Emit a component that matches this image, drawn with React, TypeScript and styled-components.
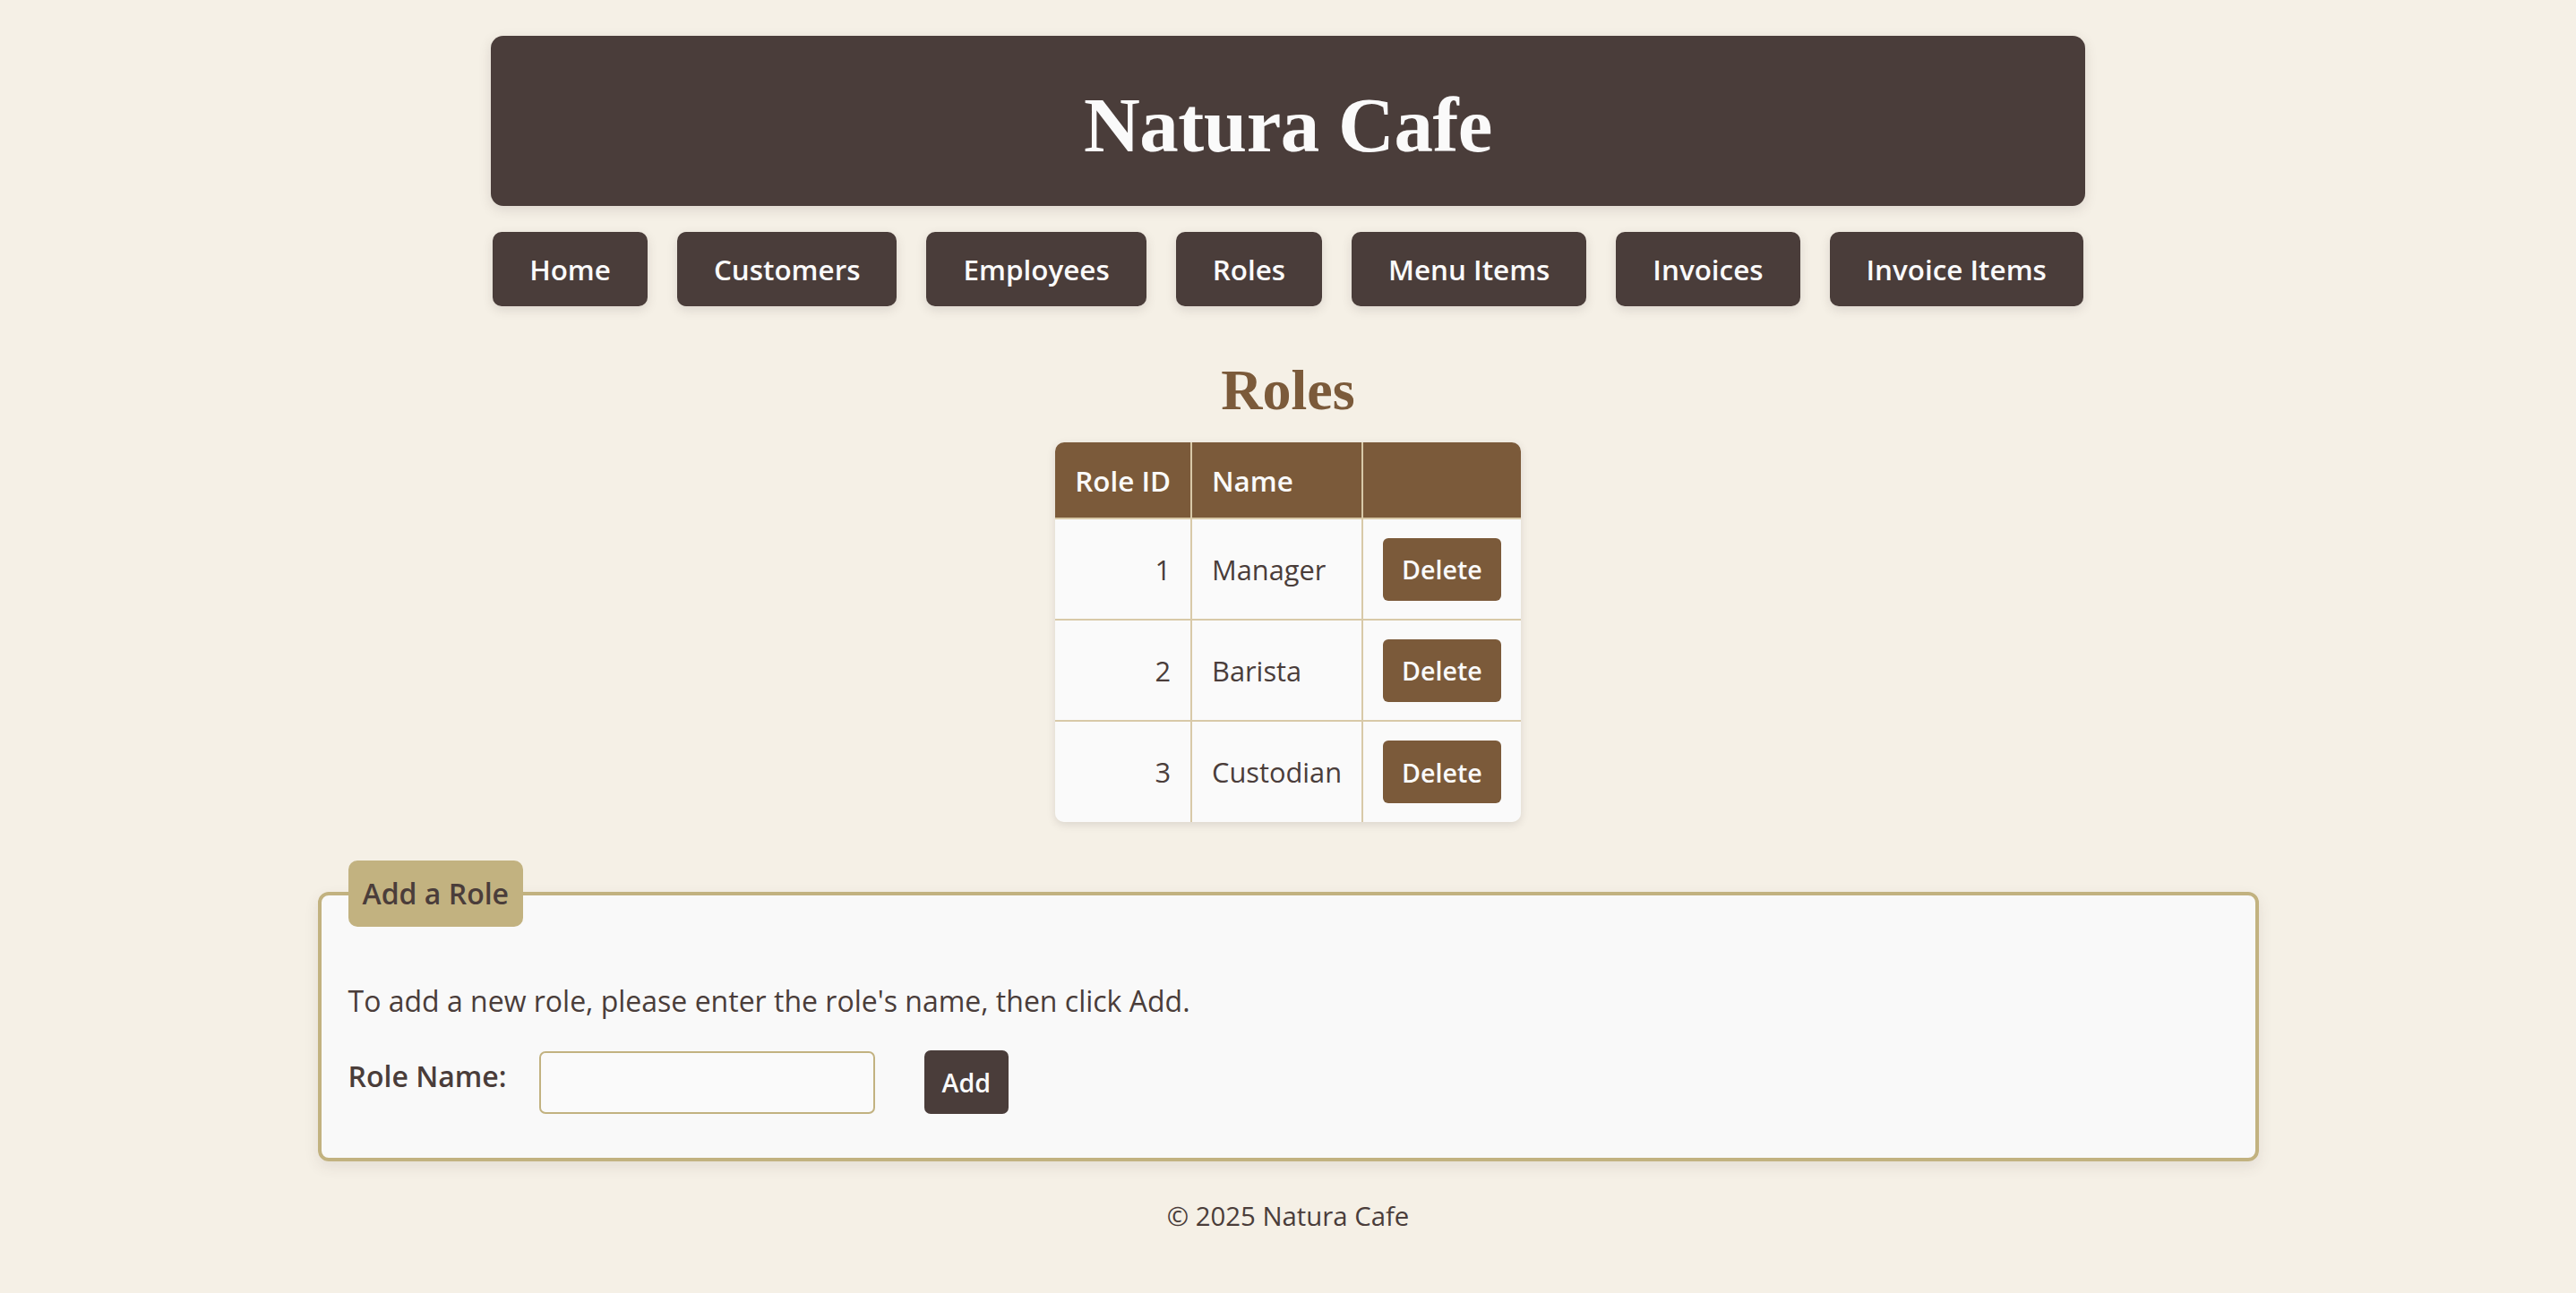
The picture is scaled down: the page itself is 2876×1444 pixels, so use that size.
import React from "react";
import styled, { createGlobalStyle } from "styled-components";

const GlobalStyle = createGlobalStyle`
  html, body {
    margin: 0;
    padding: 0;
    background: #f5f0e6;
  }
  body {
    font-family: "Open Sans", "Noto Sans", sans-serif;
    font-size: 29.34px;
    color: #4a3d3a;
  }
  * { box-sizing: border-box; }
`;

const Page = styled.div`
  display: flex;
  flex-direction: column;
  align-items: center;
  padding-top: 40px;
  padding-bottom: 40px;
`;

const Header = styled.header`
  width: 1780px;
  background: #4a3d3a;
  border-radius: 14px;
  box-shadow: 0 4px 14px rgba(74, 61, 58, 0.15);
  padding: 56px 0 47px;
  display: flex;
  justify-content: center;
`;

const Title = styled.h1`
  margin: 0;
  font-family: "Liberation Serif", "Times New Roman", serif;
  font-weight: 700;
  font-size: 87px;
  line-height: 1;
  letter-spacing: -0.5px;
  color: #fafafa;
`;

const Nav = styled.nav`
  margin-top: 29px;
  display: flex;
  gap: 33px;
  justify-content: center;
`;

const NavButton = styled.a`
  display: flex;
  align-items: center;
  height: 83px;
  padding: 0 41px;
  background: #4a3d3a;
  color: #fafafa;
  font-weight: 600;
  font-size: 31.4px;
  border-radius: 10px;
  text-decoration: none;
  box-shadow: 0 4px 12px rgba(74, 61, 58, 0.15);
`;

const SectionTitle = styled.h2`
  margin: 62px 0 26px;
  font-family: "Liberation Serif", "Times New Roman", serif;
  font-weight: 700;
  font-size: 64px;
  line-height: 1;
  color: #7b5a3a;
`;

const TableWrap = styled.div`
  border-radius: 10px;
  overflow: hidden;
  box-shadow: 0 3px 10px rgba(74, 61, 58, 0.15);
`;

const Table = styled.table`
  border-collapse: collapse;
  background: #fafafa;
`;

const HeadCell = styled.th`
  background: #7b5a3a;
  color: #fafafa;
  font-weight: 600;
  font-size: 31.4px;
  text-align: left;
  padding: 0 22px;
  height: 85px;
  border-left: 2px solid #d8c9a8;
  &:first-child { border-left: none; }
`;

const Cell = styled.td<{ $align?: string }>`
  padding: 0 22px;
  height: 113px;
  font-size: 30.8px;
  color: #4a3d3a;
  text-align: ${(p) => p.$align || "left"};
  border-top: 2px solid #d8c9a8;
  border-left: 2px solid #d8c9a8;
  &:first-child { border-left: none; }
`;

const DeleteButton = styled.button`
  display: block;
  height: 70px;
  padding: 0 21px;
  background: #7b5a3a;
  color: #fafafa;
  border: none;
  border-radius: 6px;
  font-family: "Open Sans", sans-serif;
  font-weight: 600;
  font-size: 28.6px;
`;

const Fieldset = styled.fieldset`
  width: 2167px;
  margin: 43px 0 0;
  padding: 0 30px 49px;
  border: 4px solid #c2b280;
  border-radius: 12px;
  background: #f9f9f9;
  box-shadow: 0 6px 16px rgba(74, 61, 58, 0.1);
`;

const Legend = styled.legend`
  background: #c2b280;
  color: #4a3d3a;
  font-weight: 600;
  font-size: 32px;
  line-height: 48px;
  padding: 13px 16px;
  border-radius: 10px;
`;

const Intro = styled.p`
  margin: 60px 0 32px;
  font-size: 32px;
  line-height: 46px;
`;

const FormRow = styled.div`
  display: flex;
  align-items: center;
`;

const Label = styled.label`
  font-weight: 600;
  font-size: 32px;
  margin-right: 36px;
  margin-bottom: 14px;
`;

const Input = styled.input`
  width: 375px;
  height: 70px;
  border: 2px solid #c2b280;
  border-radius: 7px;
  background: #fafafa;
  margin-right: 55px;
  font-size: 29px;
`;

const AddButton = styled.button`
  height: 71px;
  padding: 0 20px;
  background: #4a3d3a;
  color: #fafafa;
  border: none;
  border-radius: 7px;
  font-family: "Open Sans", sans-serif;
  font-weight: 600;
  font-size: 28.6px;
`;

const Footer = styled.footer`
  margin-top: 39px;
  font-size: 29.34px;
  line-height: 44px;
  color: #4a3d3a;
`;

const navItems = ["Home", "Customers", "Employees", "Roles", "Menu Items", "Invoices", "Invoice Items"];
const roles = [
  { id: 1, name: "Manager" },
  { id: 2, name: "Barista" },
  { id: 3, name: "Custodian" },
];

export default function App() {
  return (
    <>
      <GlobalStyle />
      <Page>
        <Header>
          <Title>Natura Cafe</Title>
        </Header>
        <Nav>
          {navItems.map((n) => (
            <NavButton key={n} href="#">{n}</NavButton>
          ))}
        </Nav>
        <SectionTitle>Roles</SectionTitle>
        <TableWrap>
          <Table>
            <thead>
              <tr>
                <HeadCell>Role ID</HeadCell>
                <HeadCell>Name</HeadCell>
                <HeadCell></HeadCell>
              </tr>
            </thead>
            <tbody>
              {roles.map((r) => (
                <tr key={r.id}>
                  <Cell $align="right">{r.id}</Cell>
                  <Cell>{r.name}</Cell>
                  <Cell><DeleteButton>Delete</DeleteButton></Cell>
                </tr>
              ))}
            </tbody>
          </Table>
        </TableWrap>
        <Fieldset>
          <Legend>Add a Role</Legend>
          <Intro>To add a new role, please enter the role's name, then click Add.</Intro>
          <FormRow>
            <Label htmlFor="roleName">Role Name:</Label>
            <Input id="roleName" type="text" />
            <AddButton>Add</AddButton>
          </FormRow>
        </Fieldset>
        <Footer>© 2025 Natura Cafe</Footer>
      </Page>
    </>
  );
}
